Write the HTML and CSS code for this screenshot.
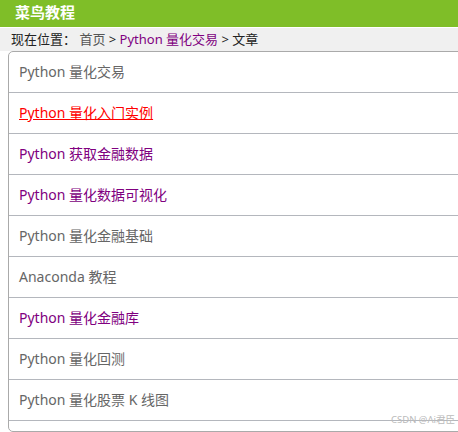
FILE: index.html
```html
<!DOCTYPE html>
<html>
<head>
<meta charset="utf-8">
<link rel="stylesheet" href="styles.css">
</head>
<body>
<div class="header">菜鸟教程</div>
<div class="crumbs">现在位置： <a class="c-home">首页</a> &gt; <a class="c-cat">Python 量化交易</a> &gt; 文章</div>
<div class="list">
  <div class="item"><a class="gray">Python 量化交易</a></div>
  <div class="item"><a class="red">Python 量化入门实例</a></div>
  <div class="item"><a class="purple">Python 获取金融数据</a></div>
  <div class="item"><a class="purple">Python 量化数据可视化</a></div>
  <div class="item"><a class="gray">Python 量化金融基础</a></div>
  <div class="item"><a class="gray">Anaconda 教程</a></div>
  <div class="item"><a class="purple">Python 量化金融库</a></div>
  <div class="item"><a class="gray">Python 量化回测</a></div>
  <div class="item"><a class="gray">Python 量化股票 K 线图</a></div>
  <div class="item last"><span class="wm">CSDN @Ai君臣</span></div>
</div>
</body>
</html>
```
FILE: styles.css
```css
html, body { margin: 0; padding: 0; background: #fff; overflow: hidden; }
body { width: 458px; height: 432px; font-family: "Noto Sans", "Noto Sans CJK SC", sans-serif; }
.header {
  height: 27px;
  background: #7fbe28;
  color: #fff;
  font-weight: bold;
  font-size: 15px;
  line-height: 25px;
  padding-left: 15px;
  border-bottom: 1px solid #fff;
}
.crumbs {
  height: 23px;
  background: #f0f0f0;
  font-size: 13px;
  line-height: 23px;
  padding-left: 11px;
  color: #222;
  white-space: nowrap;
}
.crumbs .c-home { color: #555; }
.crumbs .c-cat { color: #800080; }
.list {
  margin-left: 8px;
  width: 470px;
  height: 381px;
  border: 1px solid #aaa;
  border-radius: 5px;
  box-sizing: border-box;
  background: #fff;
  display: flex;
  flex-direction: column;
}
.item {
  height: 41px;
  flex: none;
  box-sizing: border-box;
  border-bottom: 1px solid #b4b7bd;
  padding-left: 10px;
  font-size: 14px;
  line-height: 40px;
}
.item.last { border-bottom: none; height: 10px; position: relative; }
.gray { color: #666; }
.red { color: #f00; text-decoration: underline; }
.purple { color: #800080; }
.wm {
  position: absolute;
  left: 382px;
  top: -6px;
  font-size: 9.5px;
  line-height: 10px;
  color: #bbb;
  white-space: nowrap;
}
```
